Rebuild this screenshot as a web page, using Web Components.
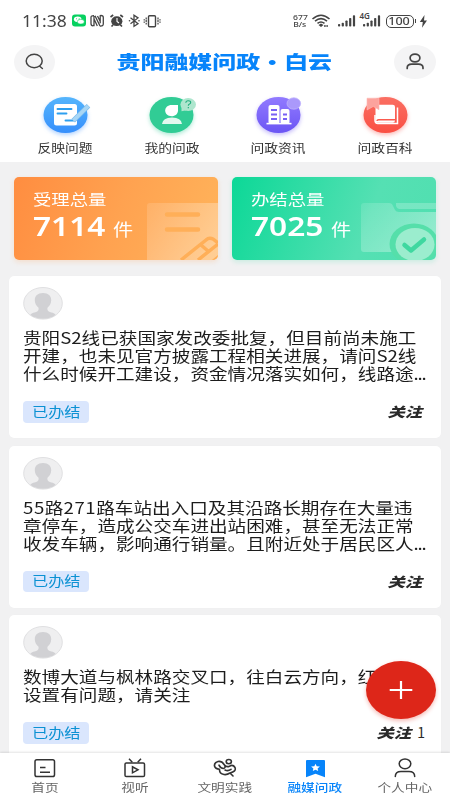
<!DOCTYPE html>
<html lang="zh-CN">
<head>
<meta charset="utf-8">
<title>贵阳融媒问政·白云</title>
<style>
html,body{margin:0;width:450px;height:800px;overflow:hidden}
body{font-family:"Noto Sans CJK SC",sans-serif;background:#f1f1f2}
</style>
</head>
<body>
<wz-app></wz-app>
<script>
const ICONS = {
search:[41,34,`<ellipse cx="20.5" cy="17" rx="20.5" ry="17" fill="#f4f4f5"/><g fill="none" stroke="#444" stroke-width="1.5" stroke-linecap="round"><ellipse cx="20.2" cy="16" rx="8" ry="6.7"/><path d="M25.7 21.2l2.7 2.3"/></g>`],
user:[42,34,`<ellipse cx="21" cy="17" rx="21" ry="17" fill="#f4f4f5"/><g fill="none" stroke="#444" stroke-width="1.7" stroke-linecap="round"><ellipse cx="21" cy="13" rx="4.9" ry="3.9"/><path d="M13.2 23.5v-.7q0-3.7 4.6-3.7h6.6q4.6 0 4.6 3.7v.7"/></g>`],
left:[140,18,`<rect x="1" y="2.500" width="14" height="12" rx="3" fill="#07d160"/><ellipse cx="6.7" cy="7.300" rx="3.800" ry="2.800" fill="#fff"/><ellipse cx="9.8" cy="9.7" rx="3.5" ry="2.4" fill="#fff" stroke="#07d160" stroke-width=".6"/><circle cx="5.5" cy="6.800" r=".5" fill="#07d160"/><circle cx="8.2" cy="6.800" r=".5" fill="#07d160"/>
<g fill="none" stroke="#444" stroke-width="1.3"><path d="M23 3.700Q20 3.500 20 5.500v6q0 2.200 2 2.400M23 4v9.500l-1-.2M29 14q3.300.3 3.300-2V5.500q0-2-2.300-2l-.8.300v7.500M24 3.700l5 10.300M26.500 4l3 6M23.300 7.500l3 6.500"/></g>
<g fill="none" stroke="#444" stroke-width="1.600"><path d="M39.500 5l2.700-2M52 5l-2.700-2M40.500 14.500l1.600-1.600M51 14.500l-1.600-1.600"/></g><ellipse cx="45.800" cy="9.200" rx="5.600" ry="4.900" fill="#444"/><path d="M46 6V9.500l2 1.500" stroke="#fff" fill="none" stroke-width="1.100"/>
<path d="M59.500 5.800l7.500 5.900-4 2.700V3.200l4 2.700-7.500 5.900" fill="none" stroke="#444" stroke-width="1.300"/><circle cx="58.500" cy="8.800" r=".8" fill="#444"/><circle cx="68" cy="8.800" r=".8" fill="#444"/>
<rect x="77.500" y="3.700" width="7" height="11" rx="1" fill="none" stroke="#444" stroke-width="1.400"/><path d="M75.200 5.500v7M87 5.500v7" fill="none" stroke="#444" stroke-width="1.200" stroke-dasharray="2 .6"/><path d="M73.200 7v4M89 7v4" stroke="#444" stroke-width="1" stroke-dasharray="1.600 .8"/>`],
wifi:[20,16,`<g fill="none" stroke="#444" stroke-width="1.600"><path d="M1.500 6Q10-1.500 18.500 6M4 8.200Q10 3.200 16 8.200M6.500 10.300Q10 7.600 13.500 10.300"/></g><path d="M7.500 12l2.500-1.600 2.500 1.600-2.500 2z" fill="#444"/><path d="M13 13h4" stroke="#444" stroke-width="1.700" stroke-dasharray="1.800 .5"/>`],
signal:[20,14,`<g fill="#444"><rect x="1" y="10" width="2.200" height="2.500" rx=".8"/><rect x="4.700" y="8.800" width="2.200" height="3.700" rx=".8"/><rect x="8.400" y="6.500" width="2.200" height="6" rx=".8"/><rect x="12.100" y="4" width="2.200" height="8.500" rx=".8"/><rect x="15.900" y="1.300" width="2.200" height="11.200" rx=".8"/></g>`],
bolt:[9,15,`<path d="M5.500 1L.8 8h3l-.8 5.700L8 6.400H5z" fill="#444"/>`],
n1:[52,44,`<ellipse cx="22.500" cy="20" rx="22" ry="18" fill="url(#a)" style="filter:drop-shadow(0 2px 2px #3f91ff66)"/><defs><linearGradient id="a" x2="0" y2="1"><stop stop-color="#55b5fc"/><stop offset="1" stop-color="#368ffc"/></linearGradient></defs><rect x="11" y="9" width="23" height="21.500" rx="2.500" fill="#fff"/><path d="M14.500 14h14M14.500 18.500h9M22.500 25.500h8" stroke="#2e9fef" stroke-width="1.900" stroke-linecap="round"/><path d="M30.200 25.700L45.500 10.700" stroke="#7cbcec" stroke-width="5"/><path d="M30.500 25.500L45.200 11" stroke="#a8d6f5" stroke-width="3.800"/>`],
n2:[52,44,`<ellipse cx="22.500" cy="20" rx="22" ry="18" fill="#31cc95" style="filter:drop-shadow(0 2px 2px #35cb9866)"/><path d="M22.500 10H29v5.500c0 3.400-2.800 5.800-6.500 5.800s-6.300-2.400-6.300-5.700 2.700-5.600 6.300-5.600z" fill="#fff"/><path d="M13 29q.7-6.500 10-6.500T33 29z" fill="#e3f8ef"/><ellipse cx="39.200" cy="9.500" rx="7.800" ry="6.500" fill="#aee6ce"/><path d="M32.500 12v4.200l5-1z" fill="#aee6ce"/><path d="M36.800 7.700q.1-2 2.400-2 2.500 0 2.500 1.800 0 1.200-1.500 1.800-.9.400-.9 1.400M39.300 12v1.200" fill="none" stroke="#20ad7d" stroke-width="1.100"/>`],
n3:[52,44,`<ellipse cx="22.500" cy="20" rx="22" ry="18" fill="url(#b)" style="filter:drop-shadow(0 2px 2px #715bf666)"/><defs><linearGradient id="b" x2="0" y2="1"><stop stop-color="#917aff"/><stop offset="1" stop-color="#6b55f4"/></linearGradient></defs><path d="M10.500 28.600h25" stroke="#fff" stroke-width="1.600"/><rect x="12.500" y="10" width="11" height="19" rx="2" fill="#fff"/><rect x="24.500" y="14" width="9" height="15" rx="2" fill="#fff"/><path d="M15 15h6M15 19.500h6M15 24h6M27 19.500h4M27 24h4" stroke="#7861f4" stroke-width="1.800"/><ellipse cx="37.800" cy="8.500" rx="6.800" ry="5.700" fill="#aa99fb" stroke="#bfb2fc" stroke-width=".8"/>`],
n4:[52,44,`<ellipse cx="22.500" cy="20" rx="22" ry="18" fill="url(#c)" style="filter:drop-shadow(0 2px 2px #f8524a66)"/><defs><linearGradient id="c" x2="0" y2="1"><stop stop-color="#fa6f63"/><stop offset="1" stop-color="#fa4f43"/></linearGradient></defs><rect x="12.500" y="9.700" width="19.500" height="18" rx="2.300" fill="#fff"/><path d="M34.500 12.500v16H15q-3-.2-3-3V20" fill="none" stroke="#fff" stroke-width="1.500"/><path d="M14 26q0-1.300 1.600-1.300h17" stroke="#fa5a4e" stroke-width="1.400" fill="none"/><path d="M4 3.200h12v11.500l-5.800-3.200-6.200 3.500z" fill="#fca39d" stroke="#fdbbb5" stroke-width=".6"/>`],
orange:[72,58,`<defs><linearGradient id="d" x2="1" y2=".6"><stop stop-color="#fff" stop-opacity=".12"/><stop offset="1" stop-color="#fff" stop-opacity=".34"/></linearGradient></defs><path d="M1 4q0-3 3-3h68v57H1z" fill="url(#d)"/><path d="M21 12.500h31M21 27.500h31" stroke="#ffaf58" stroke-width="4.500" stroke-linecap="round"/><path d="M35 58l25-20q3-3 7-1l5 4M52 58l20-16M55 43l7 6" fill="none" stroke="#ffaf58" stroke-width="3.500"/><path d="M66 58l6-5v5z" fill="#ffaf58"/>`],
green:[76,58,`<defs><linearGradient id="e" x2="1" y2=".6"><stop stop-color="#fff" stop-opacity=".12"/><stop offset="1" stop-color="#fff" stop-opacity=".38"/></linearGradient></defs><path d="M1 4q0-3 3-3h25q3 0 4 3l2 4q1 2 4 2h37v40H4q-3 0-3-3z" fill="url(#e)"/><path d="M36 1h40v6H39q-2 0-3-3z" fill="#fff" opacity=".22"/><ellipse cx="54" cy="42" rx="24.500" ry="20.500" fill="#55dfaa"/><ellipse cx="55" cy="42.500" rx="19.500" ry="16.500" fill="#9bedce"/><path d="M44.500 43l6.500 5.500 13-11" fill="none" stroke="#3fd8a0" stroke-width="4.500" stroke-linecap="round" stroke-linejoin="round"/>`],
avatar:[40,34,`<defs><clipPath id="f"><ellipse cx="20" cy="16.300" rx="19" ry="15.500"/></clipPath></defs><ellipse cx="20" cy="16.300" rx="19.300" ry="15.800" fill="#efeff0" stroke="#e0e0e2" stroke-width="1"/><path clip-path="url(#f)" d="M20 6c5.500 0 8.400 3.200 8.200 7.500-.1 3.200-1.700 5.400-3.700 7.300-.6 3 1 3.700 4 4.600 3.500.9 5 2 5.500 7H6c.5-5 2-6.100 5.500-7 3-.9 4.600-1.600 4-4.600-2-1.900-3.600-4.100-3.700-7.300C11.600 9.200 14.500 6 20 6z" fill="#d1d1d4"/>`],
t1:[24,22,`<g fill="none" stroke="#333" stroke-width="1.500"><rect x="2" y="2.800" width="19.500" height="16.800" rx="1.800"/><path d="M7 10.500h5.500M7 15.300h10"/></g>`],
t2:[24,22,`<g fill="none" stroke="#333" stroke-width="1.500"><rect x="2" y="6" width="19.500" height="13.600" rx="1.300"/><path d="M6 1.700l3.300 3.500M18 1.700l-3.300 3.500M9.500 9.800v6l5.500-3z"/></g>`],
t3:[26,22,`<g fill="none" stroke="#333" stroke-width="1.600" stroke-linecap="round" stroke-linejoin="round"><ellipse cx="16.800" cy="4.600" rx="2.600" ry="2.100"/><path d="M12.500 8Q10 3.800 6 4.500 2 5.500 2.500 9q.7 3 5 3.200-.3 4.300 4.500 5.300 3 .5 6-1.500l3 3M12.500 8q2 2.500 5 1.200 3.500-2 5.500 1.300 1.500 4-5 5.500M12.500 8q1.500 3-1 3.500-3 0-4.500-3.300M13 13q3 1.500 6-.7"/></g>`],
t4:[24,22,`<path d="M4 3h17q1 0 1 1v16.300l-9.500-3.500-9.500 3.500V4q0-1 1-1z" fill="#0784fa"/><path d="M12.500 6.700l1.200 2.500 3.200.3-2.300 1.900.6 2.700-2.700-1.300-2.700 1.300.6-2.700-2.300-1.900 3.200-.3z" fill="#fff"/>`],
t5:[24,22,`<g fill="none" stroke="#333" stroke-width="1.500" stroke-linecap="round"><ellipse cx="12" cy="6.800" rx="5.800" ry="4.900"/><path d="M2.300 19.500q0-5 5.700-5h8q5.700 0 5.700 5"/></g>`],
plus:[24,20,`<path d="M12 1v18M.7 10h22.600" stroke="#fff" stroke-width="2.200"/>`]
};
class Base extends HTMLElement{
  constructor(){super();this.attachShadow({mode:'open'})}
  connectedCallback(){this.shadowRoot.innerHTML=this.render()}
  a(n){return this.getAttribute(n)||''}
}
const def=(n,f)=>customElements.define(n,class extends Base{render(){return f.call(this)}});

def('wz-icon',function(){const [w,h,b]=ICONS[this.a('name')];
return `<style>:host{display:block;flex:none;width:${w}px;height:${h}px}svg{display:block;overflow:visible}</style><svg width="${w}" height="${h}" viewBox="0 0 ${w} ${h}">${b}</svg>`});

/* Horizontally widened text; "sx" is the stretch, "from" the fixed edge. */
def('wide-text',function(){return `<style>:host{display:block;white-space:nowrap;width:max-content}div{transform:scaleX(${this.a('sx')||1.2});transform-origin:${this.a('from')||'left'} center}</style><div><slot></slot></div>`});

def('status-bar',function(){return `<style>
:host{display:flex;height:43px;box-sizing:border-box;padding:12px 22px 0 22px;color:#444;justify-content:space-between;font-family:"Noto Sans",sans-serif}
.l,.r{display:flex;align-items:center;height:18px}.time{width:49px;font-size:15.500px;line-height:18px}
.speed{width:20px;font-size:7.500px;line-height:7.500px;text-align:center;margin-right:1px;display:grid;justify-content:center;font-weight:500}
.mob{display:grid}.mob>*{grid-area:1/1}.g{font-size:8px;line-height:8px;font-weight:600;align-self:start;margin:-2px 0 0 -2px;z-index:1}
.bat{box-sizing:border-box;width:28px;height:13px;border:1.400px solid #444;border-radius:5px;display:grid;place-items:center;font-size:10.500px;font-weight:500;line-height:10px;margin-left:4px}
.tip{width:1.500px;height:4px;background:#444;margin:0 3px 0 1px}
</style><div class="l"><div class="time"><wide-text sx="1.130">11:38</wide-text></div><wz-icon name="left"></wz-icon></div>
<div class="r"><div class="speed"><wide-text sx="1.15" from="center">677</wide-text><wide-text sx="1.15" from="center">B/s</wide-text></div><wz-icon name="wifi" style="margin-right:5.500px"></wz-icon><wz-icon name="signal" style="margin-right:5px"></wz-icon><div class="mob"><wz-icon name="signal"></wz-icon><span class="g">4G</span></div><div class="bat"><wide-text sx="1.2" from="center">100</wide-text></div><i class="tip"></i><wz-icon name="bolt"></wz-icon></div>`});

def('title-bar',function(){return `<style>
:host{display:flex;justify-content:space-between;align-items:center;height:42px;padding:0 14px;box-sizing:border-box;margin-top:-2px}
.t{font-size:18.300px;font-weight:900;color:#0784fa;line-height:30px;padding-bottom:3px}i{display:inline-block;width:1em;text-align:center;font-style:normal}
</style><wz-icon name="search"></wz-icon><wide-text class="t" sx="1.31" from="center">贵阳融媒问政<i>·</i>白云</wide-text><wz-icon name="user"></wz-icon>`});

def('nav-item',function(){return `<style>:host{display:grid;justify-items:center;align-content:start}wz-icon{margin-left:7px}wide-text{font-size:12px;line-height:16px;color:#333;margin-top:1px}</style><wz-icon name="${this.a('icon')}"></wz-icon><wide-text sx="1.150" from="center"><slot></slot></wide-text>`});
def('nav-grid',function(){return `<style>:host{display:grid;grid-template-columns:repeat(4,106.700px);padding:12px 0 0 11.700px;height:79px;box-sizing:border-box}</style>
<nav-item icon="n1">反映问题</nav-item><nav-item icon="n2">我的问政</nav-item><nav-item icon="n3">问政资讯</nav-item><nav-item icon="n4">问政百科</nav-item>`});

def('stat-card',function(){const g=this.a('kind')=='green';return `<style>
:host{display:flex;justify-content:space-between;align-items:flex-end;height:83px;border-radius:5px;overflow:hidden;color:#fff;
background:${g?'linear-gradient(110deg,#0cd897,#55e0b3 65%,#50dfb0)':'linear-gradient(110deg,#ff8d40,#ffa250 50%,#ffb45b)'};box-shadow:0 2px 5px ${g?'#20d89a30':'#ff9a4a38'}}
.x{align-self:flex-start;padding:11px 0 0 19px;width:110px}.l{font-size:15.300px;line-height:21px}.v{display:flex;align-items:baseline;line-height:32px}
.n{font:600 27.500px/33px "Noto Sans",sans-serif;width:79.500px}.u{font-size:16.500px;line-height:32px}wz-icon{margin-left:-20px}
</style><div class="x"><wide-text class="l" sx="1.2">${this.a('label')}</wide-text><div class="v"><wide-text class="n" sx="1.150">${this.a('value')}</wide-text><wide-text class="u" sx="1.220">件</wide-text></div></div><wz-icon name="${this.a('kind')}"></wz-icon>`});

def('issue-card',function(){return `<style>
:host{display:block;background:#fff;border-radius:5px;padding:11px 14px 15.500px;box-shadow:0 0 1px #0000000a}
wz-icon{margin-bottom:7px}.b{font-size:15.500px;line-height:18px;color:#1c1c1c;white-space:pre}
.f{display:flex;justify-content:space-between;align-items:center;margin-top:19px;height:21.500px}
.tag{width:66px;height:21.500px;border-radius:4px;background:#dae6fd;display:grid;place-items:center;color:#0b91d3;font-size:13.500px;line-height:18px;box-sizing:border-box;padding-bottom:2px}
.r{display:flex;align-items:center;padding-right:5.500px;color:#2a2a2a}.k{font-size:13.500px;font-weight:900;line-height:20px;font-style:italic;padding-bottom:1px}
.r.m{padding-right:2px}.c{font-size:14px;line-height:20px;margin-left:6.500px;padding-bottom:2px}
::slotted(b){font-weight:400;letter-spacing:.5px}::slotted(i){font-style:normal;letter-spacing:-1px}
</style><wz-icon name="avatar"></wz-icon><wide-text class="b" sx="1.2"><slot></slot></wide-text><div class="f"><div class="tag"><wide-text sx="1.2" from="center">已办结</wide-text></div><div class="r${this.a('count')?' m':''}"><wide-text class="k" sx="1.28" from="right">关注</wide-text>${this.a('count')?`<span class="c">${this.a('count')}</span>`:''}</div></div>`});

def('tab-item',function(){const on=this.hasAttribute('on');return `<style>:host{display:grid;justify-items:center;align-content:start;padding-top:4px}wide-text{font-size:11.900px;line-height:16px;color:${on?'#0784fa':'#666'};font-weight:${on?500:400}}</style><wz-icon name="${this.a('icon')}"></wz-icon><wide-text sx="1.150" from="center"><slot></slot></wide-text>`});
def('tab-bar',function(){return `<style>:host{display:grid;grid-template-columns:repeat(5,1fr);height:47px;background:#fff;box-shadow:0 -1px 2px #0000001c}</style>
<tab-item icon="t1">首页</tab-item><tab-item icon="t2">视听</tab-item><tab-item icon="t3">文明实践</tab-item><tab-item icon="t4" on>融媒问政</tab-item><tab-item icon="t5">个人中心</tab-item>`});
def('add-button',function(){return `<style>:host{display:grid;place-items:center;width:70px;height:58px;border-radius:50%;background:#dd2619;box-shadow:0 2px 4px #e0302055}</style><wz-icon name="plus"></wz-icon>`});

def('wz-app',function(){return `<style>
:host{display:flex;flex-direction:column;width:450px;height:800px;overflow:hidden;position:relative}
header{background:#fff;height:162px;flex:none}
main{flex:1;min-height:0;overflow:hidden;padding:15px 9px 0;display:flex;flex-direction:column}
.s{display:grid;grid-template-columns:203.500px 203.500px;gap:14.500px;padding:0 5px 16px 5px}
.feed{display:flex;flex-direction:column;gap:7.600px}tab-bar{flex:none;position:relative}
add-button{position:absolute;left:366px;top:661px}
</style><header><status-bar></status-bar><title-bar></title-bar><nav-grid></nav-grid></header>
<main><div class="s"><stat-card kind="orange" label="受理总量" value="7114"></stat-card><stat-card kind="green" label="办结总量" value="7025"></stat-card></div>
<div class="feed"><issue-card>贵阳S2线已获国家发改委批复，但目前尚未施工<br>开建，也未见官方披露工程相关进展，请问S2线<br>什么时候开工建设，资金情况落实如何，线路途<i>...</i></issue-card>
<issue-card><b>55</b>路<b>271</b>路车站出入口及其沿路长期存在大量违<br>章停车，造成公交车进出站困难，甚至无法正常<br>收发车辆，影响通行销量。且附近处于居民区人<i>...</i></issue-card>
<issue-card count="1">数博大道与枫林路交叉口，往白云方向，红绿灯<br>设置有问题，请关注</issue-card></div></main>
<tab-bar></tab-bar><add-button></add-button>`});
</script>
</body>
</html>
